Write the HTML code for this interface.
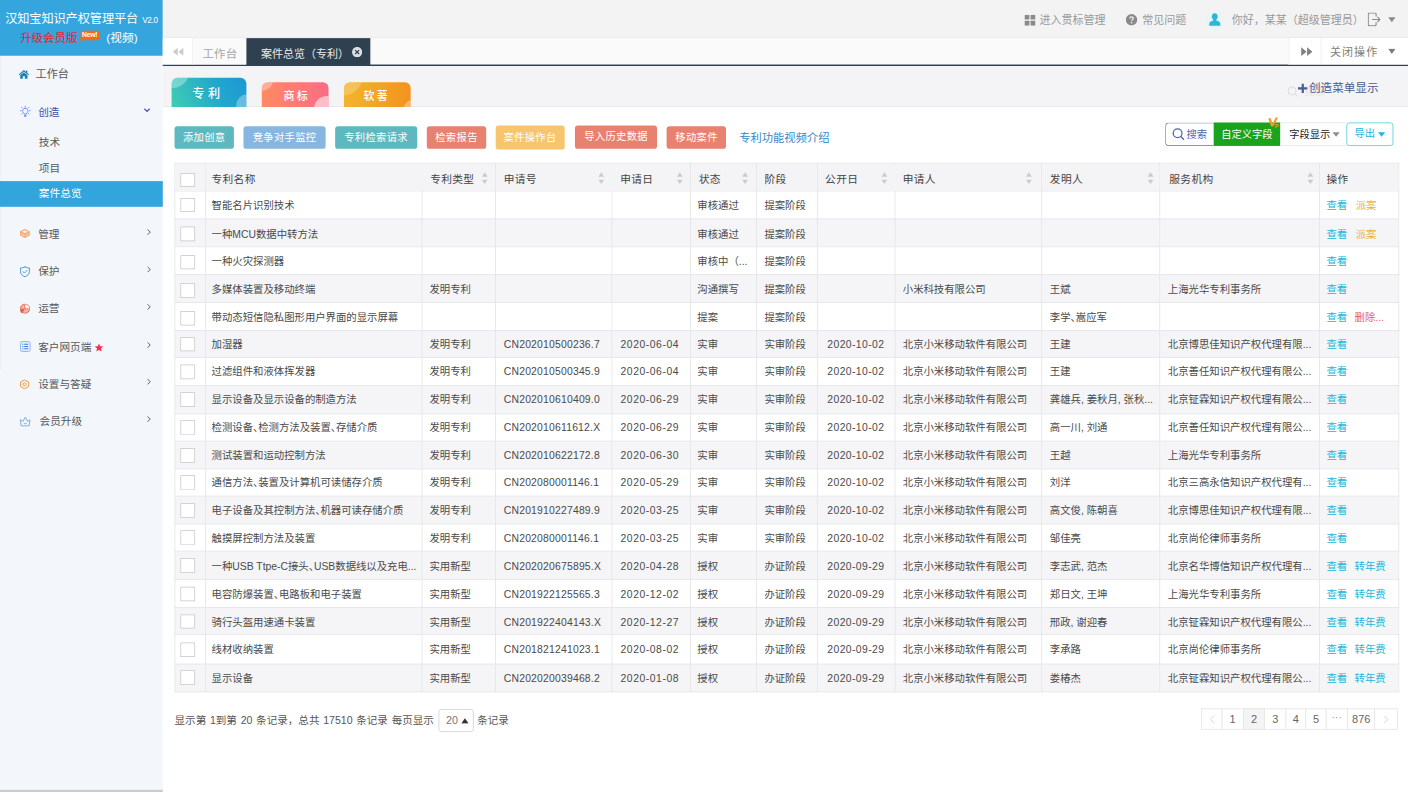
<!DOCTYPE html>
<html lang="zh-CN">
<head>
<meta charset="utf-8">
<title>汉知宝知识产权管理平台</title>
<style>
*{box-sizing:border-box;margin:0;padding:0}
html,body{width:1408px;height:792px;overflow:hidden;background:#fff}
body{font-family:"Liberation Sans","Noto Sans CJK SC",sans-serif;color:#333;position:relative}
#app{position:absolute;left:0;top:0;width:1920px;height:1080px;transform:scale(.7333333);transform-origin:0 0;font-size:14px;background:#fff;overflow:hidden}
.abs{position:absolute}
/* sidebar */
#side{position:absolute;left:0;top:0;width:222px;height:1080px;background:#f3f7fc}
#brand{position:absolute;left:0;top:0;width:222px;height:76px;background:#35a5dd;color:#fff}
#brand .t1{position:absolute;left:7px;top:14.5px;font-size:16.6px;line-height:24px;white-space:nowrap;letter-spacing:-.1px}
#brand .ver{position:absolute;left:194px;top:21px;font-size:11.3px;line-height:14px;letter-spacing:-.6px}
#brand .up{position:absolute;left:27.5px;top:41.4px;font-size:15.6px;line-height:22px;color:#e5202c;white-space:nowrap}
#brand .new{position:absolute;left:110px;top:41.5px;width:24.5px;height:13px;background:#f76b0e;border-radius:2px;color:#fff;font-size:9.3px;line-height:13px;text-align:center;font-weight:bold;letter-spacing:-.4px}
#brand .new:after{content:"";position:absolute;left:0;top:11px;border-left:5px solid #f76b0e;border-bottom:5px solid transparent}
#brand .vid{position:absolute;left:145px;top:41.4px;font-size:16px;line-height:22px;white-space:nowrap}
.nav{position:absolute;left:0;width:222px;height:34px;line-height:34px;font-size:14.5px;color:#585858;white-space:nowrap}
.nav .tx{position:absolute;left:52px;top:0}
.nav svg{position:absolute}
.nav .chev{position:absolute;left:196px;top:11px;width:9px;height:9px}
.sub{position:absolute;left:0;width:222px;height:34px;line-height:34px;font-size:14.6px;color:#585858;padding-left:53px}
.sub.on{background:#33a5dd;color:#fff}
/* top bar */
#top{position:absolute;left:222px;top:0;width:1698px;height:52px;background:#f3f3f4;border-bottom:1px solid #e4e6e8;color:#999;font-size:15px}
#top .it{position:absolute;top:0;height:52px;line-height:56.2px;white-space:nowrap}
/* tab bar */
#tabs{position:absolute;left:222px;top:52px;width:1698px;height:38px;background:#fafafa;border-bottom:2.6px solid #2f4050}
#tabs .b{position:absolute;top:0;height:36px;line-height:38px;background:#fff;font-size:15.6px;color:#999;white-space:nowrap}
/* content */
#hd{position:absolute;left:222px;top:90px;width:1698px;height:55.5px;background:#f4f4f6;border-bottom:1.3px solid #e2e4e8}
.ctab{position:absolute;color:#fff;text-align:center;border-radius:8px 8px 0 0;font-weight:500;overflow:hidden;white-space:nowrap}
.ctab i{position:absolute;border-radius:50%;background:rgba(255,255,255,.32)}
.btn{position:absolute;height:31px;line-height:31px;border-radius:4px;color:#fff;font-size:14px;text-align:center;white-space:nowrap;letter-spacing:.5px}
/* table */
#tb{position:absolute;left:238.3px;top:222.3px;width:1668.8px;border-collapse:collapse;table-layout:fixed;font-size:14.15px;color:#4a4a4a}
#tb td,#tb th{border:1.25px solid #dfe0e3;padding:.8px 0 0 10.5px;text-align:left;font-weight:normal;white-space:nowrap;overflow:hidden;vertical-align:middle;line-height:20px}
#tb th{background:#f4f4f6;color:#444;font-size:14.6px;position:relative;letter-spacing:.45px;padding-top:7.4px}
#tb tr:nth-child(odd) td{background:#f5f5f7}
#tb tr:nth-child(even) td{background:#fff}
#tb td.c,#tb th.c{padding:0 0 0 7px;text-align:left}
#tb th.c{padding-top:6.4px}
#tb td.c{padding-bottom:1px}
#tb td:nth-child(2),#tb th:nth-child(2){padding-left:7px}
#tb td:nth-child(3){padding-left:9.5px}
#tb td:nth-child(4){letter-spacing:.28px}
#tb td:nth-child(5){padding-left:11px;letter-spacing:.75px}
#tb td:nth-child(6){padding-left:8.5px}
#tb td:nth-child(8){padding-left:13.5px;letter-spacing:.55px}
#tb th:nth-child(11){padding-left:12.5px}
#tb td:nth-child(12){padding-left:9.3px}
#tb th:nth-child(12){padding-left:9.3px}
#tb tr:nth-child(-n+6) td{padding-top:3px}
#tb tr:nth-child(-n+6) td.c{padding-top:3.4px}
#tb tr:nth-child(2) td{padding-top:1.6px}
#tb tr:nth-child(2) td.c{padding-top:0}
.cb{display:inline-block;width:20px;height:19.8px;border:1.3px solid #c6c6c6;background:#fff;border-radius:.5px;vertical-align:middle}
.srt{position:absolute;right:9.5px;top:11.5px;width:9px;height:16px}
.srt:before{content:"";position:absolute;left:0;top:0;border:4.5px solid transparent;border-bottom:6.5px solid #cbcbcb;border-top:0}
.srt:after{content:"";position:absolute;left:0;bottom:0;border:4.5px solid transparent;border-top:6.5px solid #cbcbcb;border-bottom:0}

.dn{margin-right:-.5em}
#tb th:nth-child(8) .srt{right:8.8px}
#tb th:nth-child(9) .srt{right:11.7px}
#tb th:nth-child(10) .srt,#tb th:nth-child(11) .srt{right:7px}
a.v{color:#23b7d9;margin-right:10px}
a.p{color:#e9b23a;margin-left:1.5px}
a.d{color:#ea5f5f}
/* footer */
#ft{position:absolute;left:238px;top:962px;height:40px;line-height:40px;font-size:14.4px;color:#555;white-space:nowrap;word-spacing:1.1px}
#pg{position:absolute;top:965.6px;left:1639px;height:29.6px;display:flex;font-size:15px;color:#666}
#pg span{display:block;height:29.6px;line-height:28.6px;border:1.2px solid #e2e2e2;margin-left:-1.2px;text-align:center;background:#fff}
</style>
</head>
<body>
<div id="app">

<div id="side">
  <div class="abs" style="left:0;top:76px;width:1.400px;height:428px;background:#e9ecf1"></div>
  <div class="abs" style="left:0;top:1077px;width:222px;height:3px;background:#cbcbcb"></div>
  <div id="brand">
    <div class="t1">汉知宝知识产权管理平台</div>
    <div class="ver">V2.0</div>
    <div class="up">升级会员版</div>
    <div class="new">New!</div>
    <div class="vid">(视频)</div>
  </div>

  <div class="nav" style="top:84px">
    <svg style="left:25px;top:10.5px" width="15" height="13" viewBox="0 0 15 13"><path d="M7.5 .6 L.4 6.6 L1.4 7.7 L7.5 2.6 L13.6 7.7 L14.6 6.6 L12.2 4.5 V1.3 H10.4 V3 Z M2.5 7.6 L7.5 3.5 L12.5 7.6 V12.4 H8.9 V8.9 H6.1 V12.4 H2.5 Z" fill="#1a83b2"/></svg>
    <span class="tx" style="left:48.5px;font-size:15.2px">工作台</span>
  </div>

  <div class="nav" style="top:136px;color:#3f4fae">
    <svg style="left:26.5px;top:8px" width="15" height="16" viewBox="0 0 15 16" fill="none" stroke="#5c88e6" stroke-width="1.1" stroke-linecap="round"><path d="M7.5 3.6 a3.6 3.6 0 0 1 2.1 6.5 c-.5 .4 -.6 .9 -.6 1.5 h-3 c0 -.6 -.1 -1.1 -.6 -1.5 a3.6 3.6 0 0 1 2.1 -6.5z"/><path d="M6.2 13.2h2.6M6.6 14.6h1.8" stroke-width="1.3"/><path d="M7.5 .4v1.5M2.5 2.3l1 1M12.5 2.3l-1 1M.5 7h1.4M13.1 7h1.4M2.4 11.6l1-1M12.6 11.6l-1-1"/></svg>
    <span class="tx">创造</span>
    <svg class="chev" style="left:196px;top:10px" width="10" height="7" viewBox="0 0 10 7" fill="none" stroke="#3f4fae" stroke-width="1.8"><path d="M1 1l4 4 4-4"/></svg>
  </div>
  <div class="sub" style="top:177.3px">技术</div>
  <div class="sub" style="top:212.8px">项目</div>
  <div class="sub on" style="top:247px;height:34.6px;line-height:35.8px">案件总览</div>

  <div class="nav" style="top:302px">
    <svg style="left:26.5px;top:9.5px" width="14" height="13" viewBox="0 0 14 13"><path d="M7 .4 L13.6 3.300 V9.200 L7 12.600 L.4 9.200 V3.300Z" fill="#f3a56f"/><path d="M7 1.900 L11.600 4 L7 6.100 L2.400 4Z" fill="#fdeee2"/><path d="M1.600 5.600 L6.400 7.800 V11 L1.600 8.600Z M12.400 5.600 L7.600 7.800 V11 L12.400 8.600Z" fill="#f8c8a4"/></svg>
    <span class="tx">管理</span>
    <svg class="chev" width="7" height="10" viewBox="0 0 7 10" fill="none" stroke="#5e5e5e" stroke-width="1.5" style="left:199px;top:10px"><path d="M1 1l4 4-4 4"/></svg>
  </div>
  <div class="nav" style="top:353px">
    <svg style="left:26.5px;top:9.5px" width="14" height="15" viewBox="0 0 14 15" fill="none" stroke="#3b8ecb" stroke-width="1.2" stroke-linejoin="round" stroke-linecap="round"><path d="M7 .8 C5.2 2 3 2.4 .9 2.4 V7.5 C.9 10.8 3.6 13.2 7 14.3 C10.4 13.2 13.1 10.8 13.1 7.5 V2.4 C11 2.4 8.800 2 7 .8Z"/><path d="M4.3 7.4l2 2 3.6-3.7"/></svg>
    <span class="tx">保护</span>
    <svg class="chev" width="7" height="10" viewBox="0 0 7 10" fill="none" stroke="#5e5e5e" stroke-width="1.5" style="left:199px;top:10px"><path d="M1 1l4 4-4 4"/></svg>
  </div>
  <div class="nav" style="top:404px">
    <svg style="left:26.5px;top:10px" width="14" height="14" viewBox="0 0 14 14"><circle cx="7" cy="7" r="6.3" fill="#f6b3a7" stroke="#e4624c" stroke-width="1.2"/><path d="M7 7V1.2A5.8 5.8 0 0 1 12.8 7Z" fill="#fff"/><path d="M7 7H1.2A5.800 5.800 0 0 0 4 12Z" fill="#e4624c"/><path d="M6.900 2v5.100h5" stroke="#e4624c" stroke-width="1.1" fill="none"/><path d="M.4 9.500 L4.500 10 L2 13.600Z" fill="#e4624c"/></svg>
    <span class="tx">运营</span>
    <svg class="chev" width="7" height="10" viewBox="0 0 7 10" fill="none" stroke="#5e5e5e" stroke-width="1.5" style="left:199px;top:10px"><path d="M1 1l4 4-4 4"/></svg>
  </div>
  <div class="nav" style="top:456px">
    <svg style="left:26.5px;top:8.500px" width="15" height="15" viewBox="0 0 15 15"><rect x=".8" y=".8" width="13.4" height="13.4" rx="2.400" fill="#e6effd" stroke="#86b2f2" stroke-width="1.300"/><path d="M3.600 4.300h1.300M6 4.300h5.400M3.600 7.500h1.300M6 7.500h5.400M3.600 10.700h1.300M6 10.700h5.400" stroke="#3b7be9" stroke-width="1.400"/></svg>
    <span class="tx">客户网页端</span>
    <svg style="left:128.5px;top:11.500px" width="12" height="12" viewBox="0 0 12 12"><path d="M6 .3l1.700 3.800 4.100.4-3.100 2.800.9 4.100L6 9.300 2.400 11.400l.9-4.100L.2 4.500l4.100-.4Z" fill="#f5314b"/></svg>
    <svg class="chev" width="7" height="10" viewBox="0 0 7 10" fill="none" stroke="#5e5e5e" stroke-width="1.5" style="left:199px;top:9.5px"><path d="M1 1l4 4-4 4"/></svg>
  </div>
  <div class="nav" style="top:507px">
    <svg style="left:26.500px;top:10px" width="13" height="14" viewBox="0 0 13 14" fill="none" stroke="#ee9632" stroke-width="1.300" stroke-linejoin="round"><path d="M6.500 .9 L12.100 4 V10 L6.500 13.100 L.9 10 V4Z"/><circle cx="6.500" cy="7" r="2.100"/></svg>
    <span class="tx">设置与答疑</span>
    <svg class="chev" width="7" height="10" viewBox="0 0 7 10" fill="none" stroke="#5e5e5e" stroke-width="1.5" style="left:199px;top:9px"><path d="M1 1l4 4-4 4"/></svg>
  </div>
  <div class="nav" style="top:558px">
    <svg style="left:26.500px;top:10px" width="15" height="14" viewBox="0 0 15 14" fill="none" stroke="#6fa3d6" stroke-width="1.200" stroke-linejoin="round" stroke-linecap="round"><path d="M1 4.500 L4.300 6.600 L7.500 1 L10.700 6.600 L14 4.500 L12.600 12.800 H2.400Z"/><path d="M5.600 9.300c.6.900 3.200.9 3.800 0"/></svg>
    <span class="tx" style="left:54px">会员升级</span>
    <svg class="chev" width="7" height="10" viewBox="0 0 7 10" fill="none" stroke="#5e5e5e" stroke-width="1.5" style="left:199px;top:9px"><path d="M1 1l4 4-4 4"/></svg>
  </div>
</div>

<div id="top">
  <svg class="abs" style="left:1175px;top:20px" width="15" height="15" viewBox="0 0 15 15" fill="#8a8a8a"><rect x="0" y="0" width="6.700" height="6.700" rx=".6"/><rect x="8.300" y="0" width="6.700" height="6.700" rx=".6"/><rect x="0" y="8.300" width="6.700" height="6.700" rx=".6"/><rect x="8.300" y="8.300" width="6.700" height="6.700" rx=".6"/></svg>
  <div class="it" style="left:1195.500px">进入贯标管理</div>
  <svg class="abs" style="left:1313px;top:19px" width="16" height="16" viewBox="0 0 16 16"><circle cx="8" cy="8" r="7.800" fill="#8a8a8a"/><path d="M5.700 6.200c0-1.400 1-2.300 2.400-2.300 1.400 0 2.300.9 2.300 2 0 1.700-2.200 1.700-2.200 3.500" fill="none" stroke="#f3f3f4" stroke-width="1.700"/><circle cx="8.100" cy="11.900" r="1.100" fill="#f3f3f4"/></svg>
  <div class="it" style="left:1335.500px">常见问题</div>
  <svg class="abs" style="left:1422px;top:14.500px" width="25" height="25" viewBox="0 0 25 25"><circle cx="12.500" cy="12.500" r="12.500" fill="#e9f3f8"/><path d="M12.500 3.200c2.500 0 4 1.900 4 4.300 0 1.800-.8 3.500-2 4.400v1.100c3.100.7 5.500 2 5.500 4.400v2.600H5v-2.600c0-2.400 2.400-3.700 5.500-4.400v-1.100c-1.200-.9-2-2.600-2-4.400 0-2.400 1.500-4.300 4-4.300Z" fill="#2bb8d6"/></svg>
  <div class="it" style="left:1457.500px">你好，某某（超级管理员）</div>
  <svg class="abs" style="left:1642.500px;top:17px" width="18" height="19" viewBox="0 0 18 19" fill="none" stroke="#8a8a8a" stroke-width="1.500"><path d="M11.500 5.500V2.200c0-.8-.6-1.400-1.400-1.400H2.200C1.400.8.800 1.400.8 2.200v14.600c0 .8.600 1.400 1.400 1.400h7.900c.8 0 1.400-.6 1.400-1.400v-3.300"/><path d="M6 9.500h10.500M13.300 6l3.400 3.500-3.400 3.500"/></svg>
  <svg class="abs" style="left:1670.500px;top:23px" width="10" height="8" viewBox="0 0 10 8"><path d="M0 .5h10L5 7.500Z" fill="#8a8a8a"/></svg>
</div>

<div id="tabs">
  <div class="b" style="left:0;width:41px;border-right:1px solid #ececec">
    <svg class="abs" style="left:13px;top:12px" width="16" height="13" viewBox="0 0 16 13" fill="#cbcbcb"><path d="M7.300 1v11L.6 6.500ZM15 1v11L8.300 6.500Z"/></svg>
  </div>
  <div class="b" style="left:41px;width:73px;background:#fafafa;padding-left:13px;color:#a5a5a5;letter-spacing:.3px;line-height:43.4px">工作台</div>
  <div class="b" style="left:114px;width:168.500px;height:38px;background:#2f4050;color:#e8ebee;padding-left:20px;font-size:15px;line-height:44px">案件总览（专利）
    <svg class="abs" style="left:143.500px;top:12px" width="14" height="14" viewBox="0 0 14 14"><circle cx="7" cy="7" r="7" fill="#dcdfe3"/><path d="M4.300 4.300l5.400 5.400M9.700 4.300l-5.400 5.400" stroke="#2f4050" stroke-width="1.700"/></svg>
  </div>
  <div class="b" style="left:1535px;width:43.500px;border-left:1px solid #ececec">
    <svg class="abs" style="left:16px;top:12px" width="16" height="13" viewBox="0 0 16 13" fill="#808080"><path d="M.4 .5v12l7.300-6ZM8.400 .5v12l7.300-6Z"/></svg>
  </div>
  <div class="b" style="left:1578.500px;width:119.500px;border-left:1px solid #ececec;padding-left:12px;color:#7d7d7d;font-size:15px;letter-spacing:1.500px">关闭操作
    <svg class="abs" style="left:91px;top:13.500px" width="10" height="8" viewBox="0 0 10 8"><path d="M0 .5h10L5 7.500Z" fill="#7d7d7d"/></svg>
  </div>
</div>

<div id="hd">
  <div class="ctab" style="left:11.700px;top:16.400px;width:102.700px;height:39.500px;line-height:42px;font-size:16.500px;letter-spacing:5px;padding-right:3px;background:linear-gradient(65deg,#3dcab4 5%,#22a8cc 60%,#1d97d6 100%)"><i style="left:-22px;top:-30px;width:46px;height:44px"></i><i style="right:-18px;bottom:-16px;width:32px;height:34px"></i>专利</div>
  <div class="ctab" style="left:135.100px;top:21.800px;width:91.400px;height:34px;line-height:37px;font-size:15px;letter-spacing:3px;padding-left:3.500px;background:linear-gradient(90deg,#ff8a63 0%,#fb6c85 100%)"><i style="left:-18px;top:-19.500px;width:34px;height:32px"></i><i style="right:-15.600px;bottom:-19.400px;width:36px;height:34px;background:rgba(255,255,255,.55)"></i>商标</div>
  <div class="ctab" style="left:247.100px;top:21.800px;width:91.400px;height:34px;line-height:37px;font-size:15px;letter-spacing:3px;padding-right:2.500px;background:linear-gradient(90deg,#f1b52b 0%,#f3931f 100%)"><i style="left:-27px;top:-29.600px;width:52px;height:48px;background:rgba(255,255,255,.22)"></i><i style="right:-18px;bottom:-18px;width:28px;height:28px;background:rgba(255,255,255,.35)"></i>软著</div>
  <svg class="abs" style="left:1533px;top:27px;opacity:.8" width="17" height="17" viewBox="0 0 22 22" fill="none" stroke="#d3d5dc" stroke-width="1.700"><circle cx="9" cy="9" r="7"/><path d="M14 14l5.500 5.500"/></svg>
  <div class="abs" style="left:1557px;top:25px;font-size:14px;color:#e3e5ea;line-height:20px">搜索</div>
  <svg class="abs" style="left:1548px;top:24px" width="13" height="13" viewBox="0 0 13 13"><path d="M5 0h3v5h5v3H8v5H5V8H0V5h5Z" fill="#4b5b90"/></svg>
  <div class="abs" style="left:1563px;top:18px;font-size:15.800px;line-height:24px;color:#4b5b90;white-space:nowrap">创造菜单显示</div>
</div>

<div class="btn" style="left:238px;top:172px;width:81px;background:#5db9c0">添加创意</div>
<div class="btn" style="left:332px;top:172px;width:112px;background:#87b6e0">竞争对手监控</div>
<div class="btn" style="left:456.800px;top:172px;width:112px;background:#5db9c0">专利检索请求</div>
<div class="btn" style="left:582px;top:172px;width:81px;background:#e98170">检索报告</div>
<div class="btn" style="left:676px;top:170.700px;width:93.500px;height:33.300px;line-height:33px;background:#f6c56c">案件操作台</div>
<div class="btn" style="left:784.400px;top:170.700px;width:111.500px;height:32px;background:#e98170">导入历史数据</div>
<div class="btn" style="left:909.300px;top:172px;width:81px;background:#e98170">移动案件</div>
<div class="abs" style="left:1008px;top:177px;font-size:15.400px;line-height:22px;color:#3a86c8;white-space:nowrap">专利功能视频介绍</div>

<div class="abs" style="left:1588.800px;top:167.400px;width:66px;height:31.700px;border:1.300px solid #5468a6;border-right:0;border-radius:5px 0 0 5px;background:#fff">
  <svg class="abs" style="left:8px;top:6px" width="18" height="18" viewBox="0 0 18 18" fill="none" stroke="#4f65a8" stroke-width="1.700"><circle cx="7.800" cy="7.800" r="6"/><path d="M12.200 12.200l4.300 4.300"/></svg>
  <div class="abs" style="left:28px;top:4px;font-size:14px;line-height:22px;color:#4f65a8">搜索</div>
</div>
<div class="abs" style="left:1654.500px;top:167.400px;width:91.600px;height:31.700px;background:#1ba31c;color:#fff;font-size:14px;line-height:33px;text-align:center;white-space:nowrap">自定义字段</div>
<svg class="abs" style="left:1729px;top:160px" width="17" height="15" viewBox="0 0 17 15"><path d="M.5 1.500 L3.600 .8 L6.300 8.500 L10.800 0 L14 0 L7.300 12.500 L4.300 12.500Z" fill="#f39a2b"/><text x="9.200" y="14" font-family="Liberation Sans,sans-serif" font-size="8" font-weight="bold" fill="#f39a2b">P</text></svg>
<div class="abs" style="left:1746.100px;top:167.400px;width:89.500px;height:31.700px;background:#fff;border-top:1.300px solid #e3e3e3;border-bottom:1.300px solid #e3e3e3;color:#222;font-size:14px;line-height:30px;padding-left:12px;white-space:nowrap">字段显示
  <svg class="abs" style="left:71px;top:12px" width="10" height="7" viewBox="0 0 10 7"><path d="M0 .3h10L5 6.500Z" fill="#8f8f8f"/></svg>
</div>
<div class="abs" style="left:1835.600px;top:167.400px;width:64.100px;height:31.700px;background:#fff;border:1.300px solid #3ec6d8;border-radius:4px;color:#26b4dc;font-size:14px;line-height:29px;padding-left:10.500px;white-space:nowrap">导出
  <svg class="abs" style="left:42px;top:11.500px" width="10" height="7" viewBox="0 0 10 7"><path d="M0 .3h10L5 6.500Z" fill="#26b4dc"/></svg>
</div>

<table id="tb"><colgroup>
<col style="width:42.2px">
<col style="width:294.6px">
<col style="width:100.4px">
<col style="width:158.7px">
<col style="width:107.2px">
<col style="width:89.5px">
<col style="width:82.8px">
<col style="width:105.9px">
<col style="width:200.6px">
<col style="width:160.9px">
<col style="width:217.5px">
<col style="width:108.5px">
</colgroup>
<tr style="height:37.91px"><th class="c"><span class="cb"></span></th>
<th>专利名称</th>
<th>专利类型<span class="srt"></span></th>
<th>申请号<span class="srt"></span></th>
<th>申请日<span class="srt"></span></th>
<th>状态<span class="srt"></span></th>
<th>阶段</th>
<th>公开日<span class="srt"></span></th>
<th>申请人<span class="srt"></span></th>
<th>发明人<span class="srt"></span></th>
<th>服务机构<span class="srt"></span></th>
<th>操作</th>
</tr>
<tr style="height:37.36px"><td class="c"><span class="cb"></span></td>
<td>智能名片识别技术</td>
<td></td>
<td></td>
<td></td>
<td>审核通过</td>
<td>提案阶段</td>
<td></td>
<td></td>
<td></td>
<td></td>
<td class="op"><a class="v">查看</a><a class="p">派案</a></td></tr>
<tr style="height:38.59px"><td class="c"><span class="cb"></span></td>
<td>一种MCU数据中转方法</td>
<td></td>
<td></td>
<td></td>
<td>审核通过</td>
<td>提案阶段</td>
<td></td>
<td></td>
<td></td>
<td></td>
<td class="op"><a class="v">查看</a><a class="p">派案</a></td></tr>
<tr style="height:38.05px"><td class="c"><span class="cb"></span></td>
<td>一种火灾探测器</td>
<td></td>
<td></td>
<td></td>
<td>审核中（...</td>
<td>提案阶段</td>
<td></td>
<td></td>
<td></td>
<td></td>
<td class="op"><a class="v">查看</a></td></tr>
<tr style="height:38.18px"><td class="c"><span class="cb"></span></td>
<td>多媒体装置及移动终端</td>
<td>发明专利</td>
<td></td>
<td></td>
<td>沟通撰写</td>
<td>提案阶段</td>
<td></td>
<td>小米科技有限公司</td>
<td>王斌</td>
<td>上海光华专利事务所</td>
<td class="op"><a class="v">查看</a></td></tr>
<tr style="height:38.05px"><td class="c"><span class="cb"></span></td>
<td>带动态短信隐私图形用户界面的显示屏幕</td>
<td></td>
<td></td>
<td></td>
<td>提案</td>
<td>提案阶段</td>
<td></td>
<td></td>
<td>李学<span class="dn">、</span>嵩应军</td>
<td></td>
<td class="op"><a class="v">查看</a><a class="d">删除...</a></td></tr>
<tr style="height:36.82px"><td class="c"><span class="cb"></span></td>
<td>加湿器</td>
<td>发明专利</td>
<td>CN202010500236.7</td>
<td>2020-06-04</td>
<td>实审</td>
<td>实审阶段</td>
<td>2020-10-02</td>
<td>北京小米移动软件有限公司</td>
<td>王建</td>
<td>北京博思佳知识产权代理有限...</td>
<td class="op"><a class="v">查看</a></td></tr>
<tr style="height:38.05px"><td class="c"><span class="cb"></span></td>
<td>过滤组件和液体挥发器</td>
<td>发明专利</td>
<td>CN202010500345.9</td>
<td>2020-06-04</td>
<td>实审</td>
<td>实审阶段</td>
<td>2020-10-02</td>
<td>北京小米移动软件有限公司</td>
<td>王建</td>
<td>北京善任知识产权代理有限公...</td>
<td class="op"><a class="v">查看</a></td></tr>
<tr style="height:38.32px"><td class="c"><span class="cb"></span></td>
<td>显示设备及显示设备的制造方法</td>
<td>发明专利</td>
<td>CN202010610409.0</td>
<td>2020-06-29</td>
<td>实审</td>
<td>实审阶段</td>
<td>2020-10-02</td>
<td>北京小米移动软件有限公司</td>
<td>龚雄兵, 姜秋月, 张秋...</td>
<td>北京钲霖知识产权代理有限公...</td>
<td class="op"><a class="v">查看</a></td></tr>
<tr style="height:37.77px"><td class="c"><span class="cb"></span></td>
<td>检测设备<span class="dn">、</span>检测方法及装置<span class="dn">、</span>存储介质</td>
<td>发明专利</td>
<td>CN202010611612.X</td>
<td>2020-06-29</td>
<td>实审</td>
<td>实审阶段</td>
<td>2020-10-02</td>
<td>北京小米移动软件有限公司</td>
<td>高一川, 刘通</td>
<td>北京善任知识产权代理有限公...</td>
<td class="op"><a class="v">查看</a></td></tr>
<tr style="height:37.36px"><td class="c"><span class="cb"></span></td>
<td>测试装置和运动控制方法</td>
<td>发明专利</td>
<td>CN202010622172.8</td>
<td>2020-06-30</td>
<td>实审</td>
<td>实审阶段</td>
<td>2020-10-02</td>
<td>北京小米移动软件有限公司</td>
<td>王越</td>
<td>上海光华专利事务所</td>
<td class="op"><a class="v">查看</a></td></tr>
<tr style="height:37.77px"><td class="c"><span class="cb"></span></td>
<td>通信方法<span class="dn">、</span>装置及计算机可读储存介质</td>
<td>发明专利</td>
<td>CN202080001146.1</td>
<td>2020-05-29</td>
<td>实审</td>
<td>实审阶段</td>
<td>2020-10-02</td>
<td>北京小米移动软件有限公司</td>
<td>刘洋</td>
<td>北京三高永信知识产权代理有...</td>
<td class="op"><a class="v">查看</a></td></tr>
<tr style="height:37.36px"><td class="c"><span class="cb"></span></td>
<td>电子设备及其控制方法<span class="dn">、</span>机器可读存储介质</td>
<td>发明专利</td>
<td>CN201910227489.9</td>
<td>2020-03-25</td>
<td>实审</td>
<td>实审阶段</td>
<td>2020-10-02</td>
<td>北京小米移动软件有限公司</td>
<td>高文俊, 陈朝喜</td>
<td>北京博思佳知识产权代理有限...</td>
<td class="op"><a class="v">查看</a></td></tr>
<tr style="height:37.64px"><td class="c"><span class="cb"></span></td>
<td>触摸屏控制方法及装置</td>
<td>发明专利</td>
<td>CN202080001146.1</td>
<td>2020-03-25</td>
<td>实审</td>
<td>实审阶段</td>
<td>2020-10-02</td>
<td>北京小米移动软件有限公司</td>
<td>邹佳亮</td>
<td>北京尚伦律师事务所</td>
<td class="op"><a class="v">查看</a></td></tr>
<tr style="height:38.32px"><td class="c"><span class="cb"></span></td>
<td>一种USB Ttpe-C接头<span class="dn">、</span>USB数据线以及充电...</td>
<td>实用新型</td>
<td>CN202020675895.X</td>
<td>2020-04-28</td>
<td>授权</td>
<td>办证阶段</td>
<td>2020-09-29</td>
<td>北京小米移动软件有限公司</td>
<td>李志武, 范杰</td>
<td>北京名华博信知识产权代理有...</td>
<td class="op"><a class="v">查看</a><a class="v n">转年费</a></td></tr>
<tr style="height:38.32px"><td class="c"><span class="cb"></span></td>
<td>电容防爆装置<span class="dn">、</span>电路板和电子装置</td>
<td>实用新型</td>
<td>CN201922125565.3</td>
<td>2020-12-02</td>
<td>授权</td>
<td>办证阶段</td>
<td>2020-09-29</td>
<td>北京小米移动软件有限公司</td>
<td>郑日文, 王坤</td>
<td>上海光华专利事务所</td>
<td class="op"><a class="v">查看</a><a class="v n">转年费</a></td></tr>
<tr style="height:37.36px"><td class="c"><span class="cb"></span></td>
<td>骑行头盔用速通卡装置</td>
<td>实用新型</td>
<td>CN201922404143.X</td>
<td>2020-12-27</td>
<td>授权</td>
<td>办证阶段</td>
<td>2020-09-29</td>
<td>北京小米移动软件有限公司</td>
<td>邢政, 谢迎春</td>
<td>北京钲霖知识产权代理有限公...</td>
<td class="op"><a class="v">查看</a><a class="v n">转年费</a></td></tr>
<tr style="height:39.14px"><td class="c"><span class="cb"></span></td>
<td>线材收纳装置</td>
<td>实用新型</td>
<td>CN201821241023.1</td>
<td>2020-08-02</td>
<td>授权</td>
<td>办证阶段</td>
<td>2020-09-29</td>
<td>北京小米移动软件有限公司</td>
<td>李承路</td>
<td>北京尚伦律师事务所</td>
<td class="op"><a class="v">查看</a><a class="v n">转年费</a></td></tr>
<tr style="height:38.18px"><td class="c"><span class="cb"></span></td>
<td>显示设备</td>
<td>实用新型</td>
<td>CN202020039468.2</td>
<td>2020-01-08</td>
<td>授权</td>
<td>办证阶段</td>
<td>2020-09-29</td>
<td>北京小米移动软件有限公司</td>
<td>娄椿杰</td>
<td>北京钲霖知识产权代理有限公...</td>
<td class="op"><a class="v">查看</a><a class="v n">转年费</a></td></tr>
</table>

<div id="ft">显示第 1到第 20 条记录，总共 17510 条记录 每页显示<span style="display:inline-block;vertical-align:middle;width:48.500px;height:30.500px;border:1.300px solid #ccc;border-radius:4px;margin:-1px 4.500px 0 6px;line-height:29px;padding-left:9.500px;color:#777;font-size:14.600px;position:relative;word-spacing:0">20<svg style="position:absolute;left:30.500px;top:10.500px" width="10" height="8" viewBox="0 0 10 8"><path d="M5 .3L10 7.500H0Z" fill="#333"/></svg></span>条记录</div>
<div id="pg"><span style="width:29.400px;color:#ccc"><svg width="8" height="12" viewBox="0 0 8 12" fill="none" stroke="#d5d5d5" stroke-width="1.300" style="vertical-align:-1px"><path d="M6.500 1L1.500 6l5 5"/></svg></span><span style="width:29.800px">1</span><span style="width:30.800px;background:#f4f4f4">2</span><span style="width:29.500px">3</span><span style="width:28.900px">4</span><span style="width:28.500px">5</span><span style="width:30.400px;color:#999;line-height:22px">···</span><span style="width:38.900px">876</span><span style="width:31.700px"><svg width="8" height="12" viewBox="0 0 8 12" fill="none" stroke="#d5d5d5" stroke-width="1.300" style="vertical-align:-1px"><path d="M1.500 1l5 5-5 5"/></svg></span></div>

</div>
</body>
</html>
